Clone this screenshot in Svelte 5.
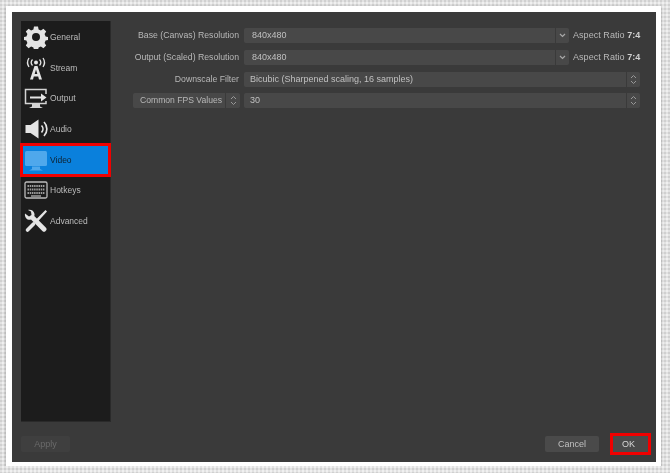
<script>
  const rows = [
    { label: "Base (Canvas) Resolution", value: "840x480", editable: true },
    { label: "Output (Scaled) Resolution", value: "840x480", editable: true },
    { label: "Downscale Filter", value: "Bicubic (Sharpened scaling, 16 samples)" }
  ];
  const tabs = ["General", "Stream", "Output", "Audio", "Video", "Hotkeys", "Advanced"];
</script>

{#snippet updown()}
  <svg width="7" height="11" viewBox="0 0 7 11" fill="none" stroke="#989898" stroke-width="1">
    <path d="M1 4 3.500 1.500 6 4M1 7 3.500 9.500 6 7" />
  </svg>
{/snippet}

{#snippet icon(name)}
  <svg class="icon" width="24" height="24" viewBox="0 0 24 24">
    {#if name === "General"}
      <path fill="#e4e4e4" fill-rule="evenodd" d="M10 1.500h4l.6 2.900 2.300 1 2.500-1.600 2.800 2.800-1.600 2.500 1 2.300 2.900.6v3l-2.900.6-1 2.300 1.600 2.500-2.800 2.800-2.500-1.600-2.300 1-.6 2.400h-4l-.6-2.400-2.300-1-2.500 1.600-2.800-2.800 1.600-2.500-1-2.300-2.900-.6v-3l2.900-.6 1-2.300-1.600-2.500 2.800-2.800 2.500 1.600 2.300-1zM12 8a4 4 0 1 0 0 8 4 4 0 0 0 0-8z" />
    {:else if name === "Stream"}
      <g fill="none" stroke="#e4e4e4" stroke-width="1.300">
        <path d="M8.500 3.500a4.500 4.500 0 0 0 0 6M5 2a8 8 0 0 0 0 9M15.500 3.500a4.500 4.500 0 0 1 0 6M19 2a8 8 0 0 1 0 9" />
      </g>
      <circle cx="12" cy="6.500" r="2" fill="#e4e4e4" />
      <path fill="#e4e4e4" fill-rule="evenodd" d="M10.500 10h3l4.500 13.500h-3l-.8-3h-4.400l-.8 3H6zM12 13.500l-1.300 4.500h2.600z" />
    {:else if name === "Output"}
      <path fill="none" stroke="#d4d4d4" stroke-width="1.500" d="M22 8V3.500H1.500v14H22V15" />
      <path fill="#d4d4d4" d="M8 18h8v2.500l3 1.500H5l3-1.500z" />
      <path fill="#e4e4e4" d="M6 10.500h11V7.500l5.500 4-5.500 4v-3H6z" />
    {:else if name === "Audio"}
      <path fill="#e4e4e4" d="M1.500 8h5l8-5.500v19l-8-5.500h-5z" />
      <path fill="none" stroke="#e4e4e4" stroke-width="1.700" d="M17.500 8.500a5 5 0 0 1 0 7M20 5a10 10 0 0 1 0 14" />
    {:else if name === "Video"}
      <rect x="1" y="3" width="22" height="15" rx="1.500" fill="#4fa8ec" />
      <path fill="#4fa8ec" d="M8 18.500h8v2.500l3 1.500H5l3-1.500z" />
    {:else if name === "Hotkeys"}
      <rect x="1" y="4" width="22" height="16" rx="1.500" fill="none" stroke="#bcbcbc" stroke-width="1.300" />
      <path stroke="#9c9c9c" stroke-width="2" stroke-dasharray="1.500 .7" d="M3.500 8h17M3.500 11.500h17M3.500 15h17" />
      <path stroke="#9c9c9c" stroke-width="1.500" d="M7 18h10" />
    {:else}
      <path fill="#e4e4e4" d="M1 4.500 5 7.500 7.500 6 7 2.500 4 1c3-.8 6 .8 6.500 4 .1.800 0 1.500-.2 2.100L22 18.800c.8.800.8 2 0 2.800l-.6.600c-.8.800-2 .8-2.800 0L7 10.600c-.7.200-1.500.3-2.300.1C2 10.100.5 7.500 1 4.500z" />
      <path fill="#e4e4e4" d="M21.500 1 23 2.500 13 13.500 11 11.500z" />
      <path fill="none" stroke="#e4e4e4" stroke-width="3.600" stroke-linecap="round" d="M9.500 15 3.500 21" />
    {/if}
  </svg>
{/snippet}

<main class="frame">
  <div class="window">
    <div class="body">
      <nav class="sidebar">
        {#each tabs as tab}
          <div class="tab" class:active={tab === "Video"}>
            {@render icon(tab)}
            <span>{tab}</span>
          </div>
        {/each}
      </nav>
      <section class="form">
        {#each rows as row}
          <div class="row">
            <div class="label">{row.label}</div>
            {#if row.editable}
              <div class="field">
                <div class="value indent">{row.value}</div>
                <div class="arrow">
                  <svg width="7" height="5" viewBox="0 0 7 5" fill="none" stroke="#a8a8a8" stroke-width="1.200"><path d="M1 1 3.500 3.500 6 1" /></svg>
                </div>
              </div>
              <div class="aspect">Aspect Ratio <b>7:4</b></div>
            {:else}
              <div class="field wide">
                <div class="value">{row.value}</div>
                <div class="spin">{@render updown()}</div>
              </div>
            {/if}
          </div>
        {/each}
        <div class="row">
          <div class="fps">
            <span>Common FPS Values</span>
            <div class="fps-spin">{@render updown()}</div>
          </div>
          <div class="field wide">
            <div class="value">30</div>
            <div class="spin">{@render updown()}</div>
          </div>
        </div>
      </section>
    </div>
    <footer class="footer">
      <button class="apply">Apply</button>
      <div class="actions">
        <button class="cancel">Cancel</button>
        <button class="ok">OK</button>
      </div>
    </footer>
  </div>
</main>

<style>
  :global(body) {
    margin: 0;
    background-color: #e2e2e2;
    background-image:
      radial-gradient(circle at 1px 1px, #d0d0d0 0.8px, transparent 1px),
      radial-gradient(circle at 3px 3px, #f0f0f0 0.8px, transparent 1px);
    background-size: 4px 4px;
  }
  .frame {
    width: 655px;
    height: 460px;
    margin: 6px 0 0 6px;
    padding: 6px 5px 5px 6px;
    box-sizing: border-box;
    background: #fff;
    box-shadow: 0 1px 3px rgba(0, 0, 0, 0.25);
  }
  .window {
    height: 450px;
    padding: 9px 9px 10px 9px;
    box-sizing: border-box;
    background: #3a3a3a;
    display: flex;
    flex-direction: column;
    font-family: "Liberation Sans", Arial, sans-serif;
    font-size: 9px;
    color: #b8b8b8;
    filter: blur(0.45px);
  }
  .body {
    height: 401px;
    display: flex;
  }
  .sidebar {
    width: 90px;
    flex: none;
    background: #1c1c1c;
    box-sizing: border-box;
    border: 1px solid #2a2a2a;
    border-width: 0 1px 1px 0;
    padding-top: 0.5px;
  }
  .tab {
    height: 30.7px;
    padding-left: 3px;
    display: flex;
    align-items: center;
    gap: 2px;
    position: relative;
    font-size: 8.500px;
    color: #bcbcbc;
  }
  .tab.active {
    background: #0a80dc;
    color: #10202e;
  }
  .tab.active::after {
    content: "";
    position: absolute;
    inset: -1px -1px -2px -1px;
    border: 3px solid #f00000;
  }
  .form {
    flex: 1;
    padding: 7px 0 0 8px;
    display: flex;
    flex-direction: column;
    gap: 6.800px;
  }
  .row {
    height: 15px;
    display: flex;
    align-items: stretch;
  }
  .label {
    width: 125px;
    flex: none;
    padding-right: 5px;
    box-sizing: border-box;
    text-align: right;
    line-height: 15px;
    white-space: nowrap;
    font-size: 8.700px;
  }
  .field {
    width: 325px;
    flex: none;
    display: flex;
    gap: 1px;
  }
  .field.wide {
    width: 396px;
  }
  .value {
    flex: 1;
    background: #484848;
    border-radius: 2px 0 0 2px;
    padding-left: 6px;
    line-height: 15px;
    color: #c0c0c0;
  }
  .value.indent {
    padding-left: 8px;
  }
  .arrow,
  .spin {
    width: 13px;
    flex: none;
    background: #484848;
    border-radius: 0 2px 2px 0;
    display: flex;
    align-items: center;
    justify-content: center;
  }
  .aspect {
    margin-left: 4px;
    line-height: 15px;
    white-space: nowrap;
    letter-spacing: 0.05px;
  }
  .aspect b {
    color: #d0d0d0;
  }
  .fps {
    width: 107px;
    margin: 0 4px 0 14px;
    flex: none;
    background: #484848;
    border-radius: 2px;
    display: flex;
    justify-content: space-between;
    line-height: 15px;
    padding-left: 7px;
    box-sizing: border-box;
    font-size: 8.600px;
    white-space: nowrap;
  }
  .fps-spin {
    width: 14px;
    flex: none;
    border-left: 1px solid #3a3a3a;
    display: flex;
    align-items: center;
    justify-content: center;
  }
  .footer {
    flex: 1;
    display: flex;
    justify-content: space-between;
    align-items: flex-start;
    padding-top: 14px;
  }
  .actions {
    display: flex;
    gap: 14px;
    margin-right: -1px;
  }
  button {
    height: 16px;
    padding: 0;
    border: none;
    border-radius: 2px;
    background: #4a4a4a;
    color: #c0c0c0;
    font: inherit;
  }
  .apply {
    width: 49px;
    background: #3f3f3f;
    color: #6a6a6a;
  }
  .cancel {
    width: 54px;
  }
  .ok {
    width: 35px;
    padding-right: 4px;
    border-radius: 0;
    outline: 3px solid #f00000;
    color: #d8d8d8;
  }
</style>
